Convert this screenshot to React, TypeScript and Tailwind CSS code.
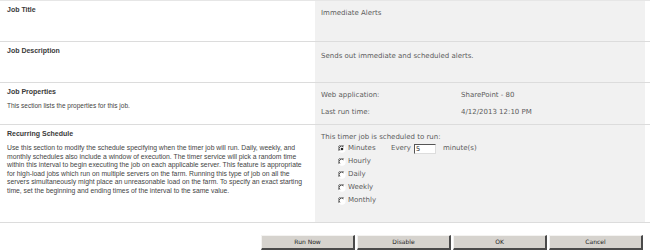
import React from 'react';

const verdana = { fontFamily: '"DejaVu Sans", Verdana, sans-serif' };

const Radio: React.FC<{ checked?: boolean }> = ({ checked }) => (
  <svg width="8" height="8" viewBox="0 0 12 12" className="shrink-0">
    <circle cx="6" cy="6" r="5.5" fill="#ffffff" />
    <path d="M1.4 8.8 A5 5 0 0 1 8.8 1.4" stroke="#808080" strokeWidth="1.5" fill="none" />
    <path d="M2.8 8.2 A3.7 3.7 0 0 1 8.2 2.8" stroke="#303030" strokeWidth="1.3" fill="none" />
    {checked && <circle cx="6" cy="6" r="2" fill="#222" />}
  </svg>
);

const Row: React.FC<{ h: string; label: string; desc?: React.ReactNode; children?: React.ReactNode }> = ({
  h,
  label,
  desc,
  children,
}) => (
  <div className={`flex ${h} border-b border-[#dcdcdc]`}>
    <div className="w-[315px] shrink-0 pl-[7px] pt-[4px] font-['Liberation_Sans',Arial,sans-serif]">
      <div className="text-[7px] font-bold text-[#3a3a3a] leading-[9px]">{label}</div>
      {desc}
    </div>
    <div className="w-[330px] shrink-0 bg-[#f1f1f1] pl-[6px] text-[#5c5c5c]" style={verdana}>
      {children}
    </div>
  </div>
);

const Button: React.FC<{ label: string }> = ({ label }) => (
  <button
    className="h-[15px] w-[94px] bg-[#d6d3ce] text-[6px] text-[#222] border-t border-l border-t-[#f4f3f1] border-l-[#f4f3f1] border-r-[2px] border-b-[2px] border-r-[#4a4a4a] border-b-[#4a4a4a] leading-none"
    style={verdana}
  >
    {label}
  </button>
);

export default function App() {
  return (
    <div className="w-[650px] h-[252px] bg-white overflow-hidden">
      <div className="border-t border-[#e6e6e6]">
        <Row h="h-[41px]" label="Job Title">
          <div className="pt-[8px] text-[7px] leading-[9px]">Immediate Alerts</div>
        </Row>
        <Row h="h-[41px]" label="Job Description">
          <div className="pt-[10px] text-[7px] leading-[9px]">Sends out immediate and scheduled alerts.</div>
        </Row>
        <Row
          h="h-[42px]"
          label="Job Properties"
          desc={<div className="mt-[6px] text-[6.5px] text-[#444] leading-[8px]">This section lists the properties for this job.</div>}
        >
          <div className="pt-[8px] text-[7px] leading-[9px]">
            <div className="flex h-[17px]">
              <span className="w-[140px]">Web application:</span>
              <span>SharePoint - 80</span>
            </div>
            <div className="flex">
              <span className="w-[140px]">Last run time:</span>
              <span>4/12/2013 12:10 PM</span>
            </div>
          </div>
        </Row>
        <Row
          h="h-[98px]"
          label="Recurring Schedule"
          desc={
            <div className="mt-[6px] text-[6.8px] text-[#444] leading-[8.5px] whitespace-nowrap">
              Use this section to modify the schedule specifying when the timer job will run. Daily, weekly, and
              <br />
              monthly schedules also include a window of execution. The timer service will pick a random time
              <br />
              within this interval to begin executing the job on each applicable server. This feature is appropriate
              <br />
              for high-load jobs which run on multiple servers on the farm. Running this type of job on all the
              <br />
              servers simultaneously might place an unreasonable load on the farm. To specify an exact starting
              <br />
              time, set the beginning and ending times of the interval to the same value.
            </div>
          }
        >
          <div className="pt-[8px] text-[7px] leading-[9px]">
            <div>This timer job is scheduled to run:</div>
            <div className="flex pl-[17px] mt-[2px]">
              <div className="flex flex-col gap-[4px] w-[53px]">
                {['Minutes', 'Hourly', 'Daily', 'Weekly', 'Monthly'].map((o, i) => (
                  <div key={o} className="flex items-center gap-[2px] h-[9px]">
                    <Radio checked={i === 0} />
                    <span>{o}</span>
                  </div>
                ))}
              </div>
              <div className="flex items-center h-[9px] gap-[3px]">
                <span>Every</span>
                <span className="w-[22px] h-[10px] bg-white border-l border-t border-l-[#555] border-t-[#555] border-r border-b border-r-[#ddd] border-b-[#ddd] text-[6.5px] text-[#222] leading-[9px] pl-[1px]">
                  5
                </span>
                <span className="ml-[4px]">minute(s)</span>
              </div>
            </div>
          </div>
        </Row>
      </div>
      <div className="flex gap-[2px] pl-[261px] mt-[12px]">
        <Button label="Run Now" />
        <Button label="Disable" />
        <Button label="OK" />
        <Button label="Cancel" />
      </div>
    </div>
  );
}
